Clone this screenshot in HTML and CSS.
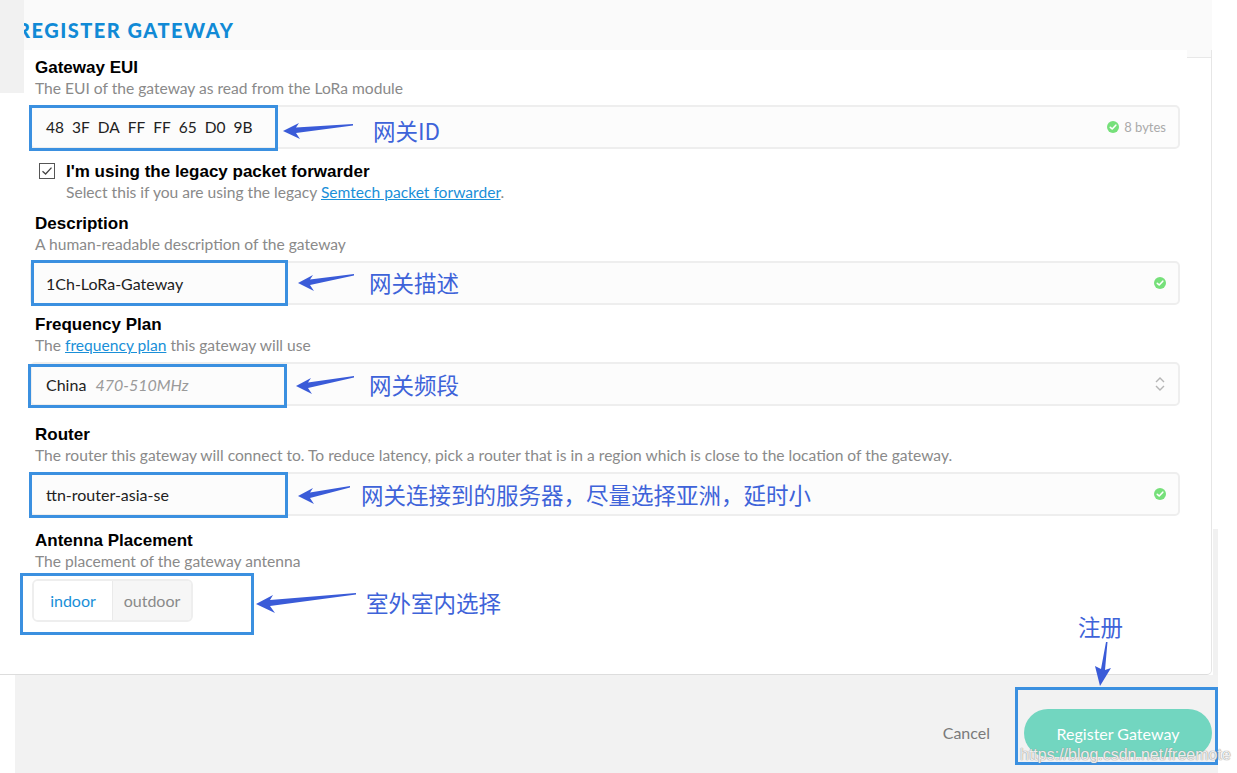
FILE: index.html
```html
<!DOCTYPE html>
<html>
<head>
<meta charset="utf-8">
<link rel="stylesheet" href="styles.css">
</head>
<body>
<div class="page">
  <div class="strip"></div>
  <div class="topband"><h1 class="title">REGISTER GATEWAY</h1></div>
  <div class="card">
    <div class="corner"></div>

    <div class="field f-eui">
      <div class="label">Gateway EUI</div>
      <div class="desc">The EUI of the gateway as read from the LoRa module</div>
      <div class="input">
        <div class="eui"><span>48</span><span>3F</span><span>DA</span><span>FF</span><span>FF</span><span>65</span><span>D0</span><span>9B</span></div>
        <div class="suffix"><span class="ok"><svg viewBox="0 0 12 12" width="12" height="12"><circle cx="6" cy="6" r="6" fill="#76e07a"/><path d="M3.3 6.3 L5.2 8 L8.8 4.2" fill="none" stroke="#fff" stroke-width="1.6" stroke-linecap="round" stroke-linejoin="round"/></svg></span>8 bytes</div>
        <div class="mark m-eui"></div>
        <div class="note n-eui">
          <svg class="arrow" viewBox="0 0 70 20" width="70" height="20"><polygon points="0,11 16,3 13,7.5 70,4 70,5.5 13,13 17,19" fill="#3a5bd8"/></svg>
          <span class="cn">网关ID</span>
        </div>
      </div>
    </div>

    <div class="field f-check">
      <div class="checkrow">
        <span class="checkbox"><svg viewBox="0 0 16 16" width="16" height="16"><path d="M3.5 8.2 L6.6 11 L12.5 4.6" fill="none" stroke="#444" stroke-width="1.3"/></svg></span>
        <div>
          <div class="label nopad">I'm using the legacy packet forwarder</div>
          <div class="desc nopad">Select this if you are using the legacy <a class="link">Semtech packet forwarder</a>.</div>
        </div>
      </div>
    </div>

    <div class="field f-desc">
      <div class="label">Description</div>
      <div class="desc">A human-readable description of the gateway</div>
      <div class="input">
        <div class="val">1Ch-LoRa-Gateway</div>
        <div class="suffix"><span class="ok"><svg viewBox="0 0 12 12" width="12" height="12"><circle cx="6" cy="6" r="6" fill="#76e07a"/><path d="M3.3 6.3 L5.2 8 L8.8 4.2" fill="none" stroke="#fff" stroke-width="1.6" stroke-linecap="round" stroke-linejoin="round"/></svg></span></div>
        <div class="mark m-desc"></div>
        <div class="note n-desc">
          <svg class="arrow" viewBox="0 0 56 20" width="56" height="20"><polygon points="0,11 15,3 12,7.5 56,2 56,3.5 12,13 16,19" fill="#3a5bd8"/></svg>
          <span class="cn">网关描述</span>
        </div>
      </div>
    </div>

    <div class="field f-freq">
      <div class="label">Frequency Plan</div>
      <div class="desc">The <a class="link">frequency plan</a> this gateway will use</div>
      <div class="input select">
        <div class="val">China <em class="hint">470-510MHz</em></div>
        <div class="suffix"><svg viewBox="0 0 12 18" width="12" height="18"><path d="M2 7 L6 3 L10 7 M2 11 L6 15 L10 11" fill="none" stroke="#b5b5b5" stroke-width="1.4"/></svg></div>
        <div class="mark m-freq"></div>
        <div class="note n-freq">
          <svg class="arrow" viewBox="0 0 58 20" width="58" height="20"><polygon points="0,12 15,4 12,8.5 58,2 58,3.5 12,14 16,20" fill="#3a5bd8"/></svg>
          <span class="cn">网关频段</span>
        </div>
      </div>
    </div>

    <div class="field f-router">
      <div class="label">Router</div>
      <div class="desc">The router this gateway will connect to. To reduce latency, pick a router that is in a region which is close to the location of the gateway.</div>
      <div class="input">
        <div class="val">ttn-router-asia-se</div>
        <div class="suffix"><span class="ok"><svg viewBox="0 0 12 12" width="12" height="12"><circle cx="6" cy="6" r="6" fill="#76e07a"/><path d="M3.3 6.3 L5.2 8 L8.8 4.2" fill="none" stroke="#fff" stroke-width="1.6" stroke-linecap="round" stroke-linejoin="round"/></svg></span></div>
        <div class="mark m-router"></div>
        <div class="note n-router">
          <svg class="arrow" viewBox="0 0 52 20" width="52" height="20"><polygon points="0,12 15,4 12,8.5 52,2 52,3.5 12,14 16,20" fill="#3a5bd8"/></svg>
          <span class="cn">网关连接到的服务器，尽量选择亚洲，延时小</span>
        </div>
      </div>
    </div>

    <div class="field f-ant">
      <div class="label">Antenna Placement</div>
      <div class="desc">The placement of the gateway antenna</div>
      <div class="toggle-wrap">
        <div class="toggle">
          <span class="seg on">indoor</span>
          <span class="seg">outdoor</span>
        </div>
        <div class="mark m-ant"></div>
        <div class="note n-ant">
          <svg class="arrow" viewBox="0 0 100 22" width="100" height="22"><polygon points="0,13 17,4 14,9 100,2 100,3.5 14,15 19,22" fill="#3a5bd8"/></svg>
          <span class="cn">室外室内选择</span>
        </div>
      </div>
    </div>
  </div>

  <div class="sidegray"></div>

  <div class="footer">
    <span class="cancel">Cancel</span>
    <div class="btn-wrap">
      <button class="register">Register Gateway</button>
      <div class="mark m-btn"></div>
      <div class="note n-btn">
        <span class="cn">注册</span>
        <svg class="arrow-down" viewBox="0 0 20 44" width="20" height="44"><polygon points="13,0 14.5,0 12,28 18,26 7,44 2,24 8,27" fill="#3a5bd8"/></svg>
      </div>
      <div class="watermark">https://blog.csdn.net/freemote</div>
    </div>
  </div>
</div>
</body>
</html>
```
FILE: styles.css
```css
* { box-sizing: border-box; }
html, body { margin: 0; padding: 0; background: #fff; }
.page {
  position: relative;
  width: 1237px;
  height: 773px;
  overflow: hidden;
  background: #fff;
  font-family: Lato, "Open Sans", sans-serif;
}
.strip {
  position: absolute;
  left: 0; top: 0;
  width: 24px; height: 93px;
  background: #f1f1f1;
  z-index: 2;
}
.topband {
  margin-left: 24px;
  width: 1188px;
  height: 50px;
  background: #fafafa;
  overflow: hidden;
  display: flex;
  align-items: center;
}
.title {
  margin: 0 0 0 -7px;
  padding-top: 9px;
  font-family: Lato, sans-serif;
  font-weight: 900;
  font-size: 20px;
  letter-spacing: 1.5px;
  color: #118ad6;
  white-space: nowrap;
}
.card {
  position: relative;
  width: 1212px;
  height: 625px;
  padding-top: 8px;
  border-right: 1px solid #e6e6e6;
  border-bottom: 1px solid #dddddd;
  border-bottom-right-radius: 5px;
  background: #fff;
}
.corner {
  position: absolute;
  right: 0; top: 0;
  width: 24px; height: 8px;
  background: #fafafa;
  border-bottom: 1px solid #e8e8e8;
}
.field { padding-left: 30px; }
.label {
  padding-left: 5px;
  font-family: "Liberation Sans", Arial, sans-serif;
  font-weight: bold;
  font-size: 17px;
  line-height: 20px;
  color: #000;
}
.desc {
  padding-left: 5px;
  font-size: 15.6px;
  line-height: 20px;
  color: #8a8a8a;
}
.nopad { padding-left: 0; }
.link { color: #1a8fd8; text-decoration: underline; }
.input {
  position: relative;
  margin-top: 7px;
  width: 1150px;
  height: 44px;
  border: 2px solid #eeeeee;
  border-radius: 5px;
  background: #fcfcfc;
  display: flex;
  align-items: center;
  justify-content: space-between;
  padding: 0 12px 0 14px;
  font-size: 16px;
  color: #222;
}
.eui { display: flex; gap: 8px; font-size: 15.5px; }
.suffix {
  display: flex;
  align-items: center;
  gap: 5px;
  font-size: 13px;
  color: #aaaaaa;
}
.ok { display: flex; }
.hint { color: #9a9a9a; margin-left: 5px; }
.f-check { padding-left: 39px; margin-top: 13px; }
.checkrow { display: flex; gap: 11px; align-items: flex-start; }
.checkbox {
  margin-top: 1px;
  width: 16px; height: 16px;
  border: 1px solid #555;
  background: #fff;
  display: flex;
}
.checkbox svg { margin: -1px; }
.f-desc { margin-top: 12px; }
.f-freq { margin-top: 10px; }
.f-router { margin-top: 19px; }
.f-ant { margin-top: 15px; }
.toggle-wrap { position: relative; margin-top: 8px; height: 43px; }
.toggle {
  margin-left: 2px;
  width: 161px;
  height: 43px;
  border: 2px solid #eeeeee;
  border-radius: 6px;
  display: flex;
  overflow: hidden;
  font-size: 16px;
}
.seg {
  flex: 1;
  display: flex;
  align-items: center;
  justify-content: center;
  background: #f6f6f6;
  color: #8a8a8a;
}
.seg.on { background: #fff; color: #1a8fd8; border-right: 1px solid #eaeaea; flex: 0 0 79px; }

.mark {
  position: absolute;
  border: 3px solid #3b90e0;
  pointer-events: none;
}
.m-eui { left: -3px; top: -2px; width: 249px; height: 46px; }
.m-desc { left: -1px; top: -3px; width: 257px; height: 46px; }
.m-freq { left: -4px; top: 0px; width: 259px; height: 44px; }
.m-router { left: -3px; top: -2px; width: 259px; height: 46px; }
.m-ant { left: -10px; top: -6px; width: 234px; height: 62px; }

.note {
  position: absolute;
  display: flex;
  align-items: center;
  pointer-events: none;
}
.cn {
  font-family: "Noto Sans CJK SC", sans-serif;
  font-size: 22.5px;
  color: #3e63d9;
  line-height: 28px;
  white-space: nowrap;
}
.n-eui { left: 251px; top: 9px; gap: 20px; }
.n-desc { left: 266px; top: 5px; gap: 15px; }
.n-freq { left: 264px; top: 6px; gap: 15px; }
.n-router { left: 266px; top: 6px; gap: 11px; }
.n-ant { left: 226px; top: 9px; gap: 10px; }

.sidegray {
  position: absolute;
  left: 1213px; top: 529px;
  width: 5px; height: 146px;
  background: #f1f1f1;
}
.footer {
  margin-left: 15px;
  width: 1203px;
  height: 98px;
  background: #f2f2f2;
  display: flex;
  justify-content: flex-end;
  align-items: flex-start;
  padding: 34px 6px 0 0;
  gap: 34px;
}
.cancel {
  margin-top: 14px;
  font-size: 16px;
  color: #7a7a7a;
}
.btn-wrap { position: relative; }
.register {
  display: block;
  width: 188px;
  height: 48px;
  border: none;
  border-radius: 24px;
  background: #72d6c0;
  color: #fff;
  font-family: Lato, sans-serif;
  font-size: 16px;
  padding: 0;
}
.m-btn { left: -9px; top: -22px; width: 203px; height: 78px; }
.n-btn {
  left: 54px; top: -97px;
  flex-direction: column;
  align-items: flex-start;
  gap: 2px;
}
.arrow-down { margin-left: 15px; }
.watermark {
  position: absolute;
  left: -4px; top: 37px;
  font-family: "Liberation Sans", Arial, sans-serif;
  font-size: 16px;
  color: rgba(255,255,255,0.85);
  text-shadow: 0 0 1px #888, 0 0 1px #aaa;
  white-space: nowrap;
}
```
